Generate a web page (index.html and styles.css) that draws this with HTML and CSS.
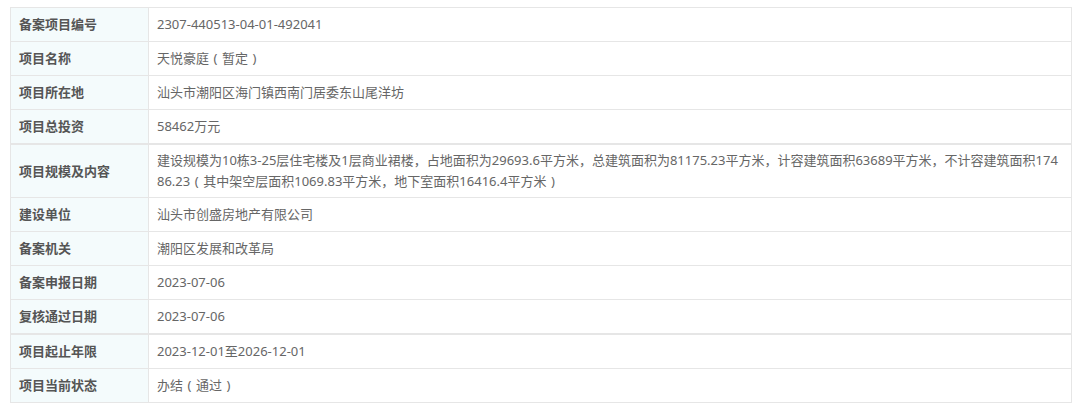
FILE: index.html
```html
<!DOCTYPE html>
<html lang="zh-CN">

<head>
    <meta charset="UTF-8">
    <meta name="viewport" content="width=device-width, initial-scale=1.0">
    <title>项目备案信息</title>
    <link rel="stylesheet" href="styles.css">
</head>

<body>
    <table class="info">
        <tr>
            <th>备案项目编号</th>
            <td>2307-440513-04-01-492041</td>
        </tr>
        <tr>
            <th>项目名称</th>
            <td>天悦豪庭<span class="pn">(</span>暂定<span class="pn">)</span></td>
        </tr>
        <tr>
            <th>项目所在地</th>
            <td>汕头市潮阳区海门镇西南门居委东山尾洋坊</td>
        </tr>
        <tr class="thick">
            <th>项目总投资</th>
            <td>58462万元</td>
        </tr>
        <tr>
            <th>项目规模及内容</th>
            <td class="long">建设规模为10栋3-25层住宅楼及1层商业裙楼，占地面积为29693.6平方米，总建筑面积为81175.23平方米，计容建筑面积63689平方米，不计容建筑面积17486.23<span class="pn">(</span>其中架空层面积1069.83平方米，地下室面积16416.4平方米<span class="pn">)</span></td>
        </tr>
        <tr>
            <th>建设单位</th>
            <td>汕头市创盛房地产有限公司</td>
        </tr>
        <tr>
            <th>备案机关</th>
            <td>潮阳区发展和改革局</td>
        </tr>
        <tr>
            <th>备案申报日期</th>
            <td>2023-07-06</td>
        </tr>
        <tr class="thick">
            <th>复核通过日期</th>
            <td>2023-07-06</td>
        </tr>
        <tr>
            <th>项目起止年限</th>
            <td>2023-12-01至2026-12-01</td>
        </tr>
        <tr>
            <th>项目当前状态</th>
            <td>办结<span class="pn">(</span>通过<span class="pn">)</span></td>
        </tr>
    </table>
</body>

</html>
```

FILE: styles.css
```css
body {
    margin: 7px 0 0 10px;
    background: #fff;
    font-family: "Microsoft YaHei", "Noto Sans", "Noto Sans CJK SC", sans-serif;
    font-size: 13px;
}

.info {
    width: 1062px;
    border-collapse: collapse;
    border: 1px solid #e2e2e2;
    table-layout: fixed;
}

.info th,
.info td {
    border: 1px solid #e6e6e6;
    padding: 6px 9px 6px 8px;
    line-height: 21px;
    text-align: left;
    vertical-align: middle;
}

.info th {
    width: 120px;
    background: #f4fbfc;
    color: #555;
    font-weight: bold;
}

.info td {
    color: #666;
    background: #fff;
}

.info td.long {
    word-break: break-all;
    padding-top: 5px;
    padding-bottom: 5px;
}

/* 全角括号居中显示 */
.info .pn {
    display: inline-block;
    width: 13px;
    text-align: center;
}

.info tr.thick th,
.info tr.thick td {
    border-bottom: 2px solid #e6e6e6;
}
```
